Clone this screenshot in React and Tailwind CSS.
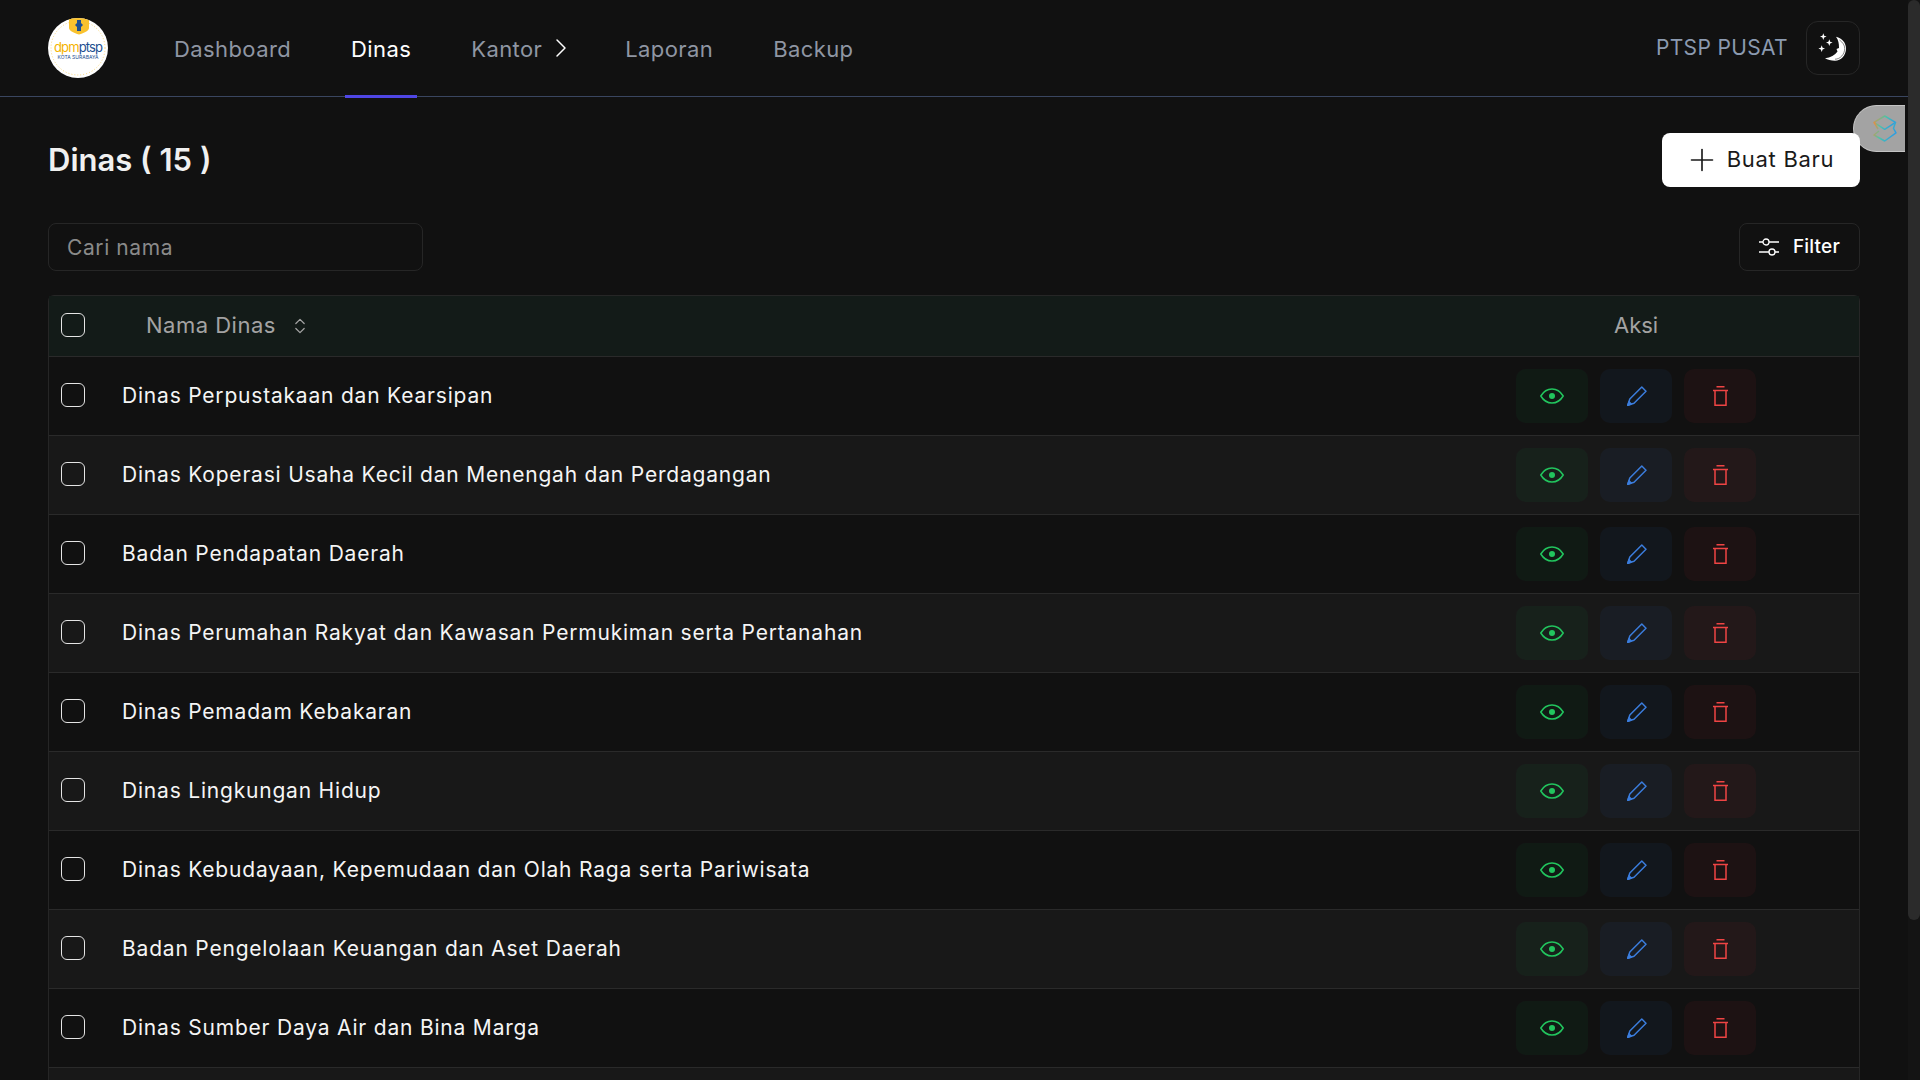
import React from 'react';
import { Plus, ChevronRight, ChevronsUpDown } from 'lucide-react';

const DINAS = [
  'Dinas Perpustakaan dan Kearsipan',
  'Dinas Koperasi Usaha Kecil dan Menengah dan Perdagangan',
  'Badan Pendapatan Daerah',
  'Dinas Perumahan Rakyat dan Kawasan Permukiman serta Pertanahan',
  'Dinas Pemadam Kebakaran',
  'Dinas Lingkungan Hidup',
  'Dinas Kebudayaan, Kepemudaan dan Olah Raga serta Pariwisata',
  'Badan Pengelolaan Keuangan dan Aset Daerah',
  'Dinas Sumber Daya Air dan Bina Marga',
];

function Logo() {
  return (
    <div className="w-[60px] h-[60px] rounded-full bg-white relative overflow-hidden shrink-0">
      <svg viewBox="0 0 60 60" className="absolute inset-0 w-full h-full">
        <circle cx="30" cy="30" r="27" fill="none" stroke="#f5c542" strokeWidth="0.7" strokeDasharray="1 2" />
        <path d="M21 0h20v10c0 3-5 5-10 6.500-5-1.500-10-3.500-10-6.500z" fill="#f9c22e" />
        <path d="M29 2h4v3l2 2-2 2v4h-4V9l-2-2 2-2z" fill="#1d4f91" />
      </svg>
      <div className="absolute left-0 right-0 top-[23px] text-center text-[13px] leading-[13px] tracking-[-0.9px] font-['Inter']">
        <span className="text-[#f5b301]">dpm</span><span className="text-[#1d4f91]">ptsp</span>
      </div>
      <div className="absolute left-0 right-0 top-[37px] text-center text-[5px] leading-[5px] text-[#1d4f91] font-['Inter']">KOTA SURABAYA</div>
    </div>
  );
}

function MoonStars() {
  return (
    <svg viewBox="-2 -2 30 30" className="w-[30px] h-[30px]" fill="none">
      <path d="M16 1.700C22.500 3.500 26 8 26 13.500 26 20.500 21 25.700 15 25.700 11 25.700 7.500 24.800 5 23.300 10.500 22.500 15 20 17.500 16.500L16.500 14 19 13C19 8.500 18.500 5 16 1.700Z" fill="#fff" />
      <path d="M19.500 5C22.800 7.500 24.700 10 24.700 13.500 24.700 19.500 20 24.200 15 24.200" stroke="#111" strokeWidth="0.5" />
      <path d="M3.300-1.700l.9 2.400 2.400.9-2.400.9-.9 2.400-.9-2.400-2.400-.9 2.400-.9zM9.300 4.300l.9 2.400 2.400.9-2.400.9-.9 2.400-.9-2.400-2.400-.9 2.400-.9zM1.700 10.300l.9 2.400 2.400.9-2.400.9-.9 2.400-.9-2.400-2.400-.9 2.400-.9z" fill="#fff" />
    </svg>
  );
}

function EyeIcon() {
  return (
    <svg viewBox="0 0 24 16" className="w-6 h-4" fill="none" stroke="#22c55e" strokeWidth="1.500">
      <path d="M.8 8C3.500 3.500 7.500 1 12 1s8.500 2.500 11.200 7C20.500 12.500 16.500 15 12 15S3.500 12.500.8 8z" />
      <circle cx="12" cy="8" r="3" fill="#22c55e" stroke="none" />
    </svg>
  );
}

function PencilIcon() {
  return (
    <svg viewBox="0 0 20 20" className="w-5 h-5 -mt-px ml-px" fill="none" stroke="#3b7ddd" strokeWidth="1.500" strokeLinejoin="round">
      <path d="M.8 19.200l2-6.200L14.800 1l4.200 4.200L7 17.200z" />
      <path d="M.8 19.200l1.200-3.500 2.300 2.300z" fill="#3b7ddd" />
    </svg>
  );
}

function TrashIcon() {
  return (
    <svg viewBox="0 0 15 20" className="w-[15px] h-5 -mt-px" fill="none" stroke="#ef4444" strokeWidth="1.500">
      <path d="M3.500.8h8M0 4.500h15M2 4.500v14.700h11V4.500" />
    </svg>
  );
}

function FilterIcon() {
  return (
    <svg viewBox="0 0 20 20" className="w-5 h-5" fill="none" stroke="#fff" strokeWidth="1.300">
      <path d="M0 5h4M10 5h10M0 15h10M16 15h4" />
      <circle cx="7" cy="5" r="3" />
      <circle cx="13" cy="15" r="3" />
    </svg>
  );
}

function StackLogo() {
  return (
    <svg viewBox="0 0 24 28" className="w-6 h-7" fill="none" strokeWidth="1.500" strokeLinejoin="round">
      <defs>
        <linearGradient id="stack" x1="0" y1="0" x2="1" y2="0.400">
          <stop offset="0" stopColor="#f08a3c" />
          <stop offset="0.5" stopColor="#4cc4a8" />
          <stop offset="1" stopColor="#2f9fe0" />
        </linearGradient>
      </defs>
      <path d="M1 7.300L11.700 1l10.800 6.300-10.800 7z" stroke="url(#stack)" />
      <path d="M1 7.300l4 6.700M22.500 7.300l-2 6 2.500 4.500-11.300 8.200L1 20l5-4" stroke="url(#stack)" />
    </svg>
  );
}

function Checkbox() {
  return <div className="w-6 h-6 -mt-[2px] rounded-md border border-[#e5e5e5] shrink-0" />;
}

function ActionButton({ tint, children }) {
  return <button className={`w-[72px] h-[54px] rounded-[10px] flex items-center justify-center ${tint}`}>{children}</button>;
}

function Row({ name, odd }) {
  return (
    <div className={`h-[79px] flex items-center pl-3 border-t border-[#2a2a2a] ${odd ? 'bg-[#181818]' : 'bg-[#111111]'}`}>
      <Checkbox />
      <div className="ml-[37px] flex-1 text-[21px] text-[#f5f5f5] tracking-[0.8px]">{name}</div>
      <div className="flex gap-3 w-[343px]">
        <ActionButton tint="bg-green-500/5"><EyeIcon /></ActionButton>
        <ActionButton tint="bg-blue-500/5"><PencilIcon /></ActionButton>
        <ActionButton tint="bg-red-500/5"><TrashIcon /></ActionButton>
      </div>
    </div>
  );
}

export default function App() {
  return (
    <div className="h-screen w-full overflow-hidden flex bg-[#111111] font-['Inter',sans-serif]">
      <div className="flex-1 min-w-0 flex flex-col">
        <header className="h-[97px] shrink-0 flex items-center pl-12 pr-[48px] border-b border-[#3a4660]">
          <Logo />
          <nav className="ml-[60px] flex h-full gap-[48px] text-[22px] text-[#8f96a3] tracking-[0.4px]">
            <a className="flex items-center px-[6px] pt-[3px]">Dashboard</a>
            <a className="relative flex items-center px-[6px] pt-[3px] text-white">Dinas
              <span className="absolute left-0 right-0 -bottom-[2px] h-[3px] bg-[#4f46e5]" />
            </a>
            <a className="flex items-center px-[6px] pt-[3px]">Kantor <ChevronRight className="w-8 h-8 ml-[3px] -mr-3 -mt-[3px] text-white" strokeWidth={1.1} /></a>
            <a className="flex items-center px-[6px] pt-[3px]">Laporan</a>
            <a className="flex items-center px-[6px] pt-[3px]">Backup</a>
          </nav>
          <div className="ml-auto flex items-center gap-[18px]">
            <span className="text-[21px] text-[#8b9ab0] tracking-[0.35px]">PTSP PUSAT</span>
            <button className="w-[54px] h-[54px] rounded-xl border border-[#262626] flex items-center justify-center"><MoonStars /></button>
          </div>
        </header>

        <main className="flex-1 min-h-0 pl-12 pr-12 relative">
          <div className="absolute right-[3px] top-[8px] w-[52px] h-[47px] rounded-l-[24px] bg-[#a3a3a3] border border-[#c4c4c4] border-r-0 flex items-center pl-[19px]">
            <StackLogo />
          </div>
          <div className="flex items-center justify-between pt-[36px] relative">
            <h1 className="text-[31px] font-semibold text-[#f0f0f0] leading-[40px]">Dinas ( 15 )</h1>
            <button className="h-[54px] w-[198px] rounded-lg bg-white flex items-center justify-center gap-[7px] pb-px text-[22px] text-[#1a1a1a] tracking-[0.7px]">
              <Plus className="w-9 h-9 -ml-1" strokeWidth={1.1} /> Buat Baru
            </button>
          </div>
          <div className="flex items-center justify-between mt-[36px]">
            <div className="w-[375px] h-[48px] rounded-lg border border-[#262626] flex items-center px-[18px] pt-px text-[21px] tracking-[0.6px] text-[#8a8a8a]">Cari nama</div>
            <button className="h-[48px] w-[121px] rounded-lg border border-[#262626] flex items-center justify-center gap-[14px] text-[19px] tracking-[0.2px] font-medium text-white">
              <FilterIcon /> Filter
            </button>
          </div>
          <div className="mt-[24px] border-x border-t border-[#262626] rounded-t-md">
            <div className="h-[60px] flex items-center pl-3 bg-[#131b18]">
              <Checkbox />
              <div className="ml-[61px] flex-1 flex items-center gap-[14px] pb-px text-[22px] tracking-[0.5px] text-[#a3a3a3]">Nama Dinas <ChevronsUpDown className="w-5 h-5 text-[#a3a3a3]" strokeWidth={1.5} /></div>
              <div className="w-[343px] pl-[98px] pb-px text-[22px] text-[#a3a3a3]">Aksi</div>
            </div>
            {DINAS.map((name, i) => <Row key={name} name={name} odd={i % 2 === 1} />)}
            <div className="h-[79px] border-t border-[#2a2a2a] bg-[#181818]" />
          </div>
        </main>
      </div>
      <div className="w-[12px] shrink-0 bg-[#141414]">
        <div className="h-[920px] rounded-full bg-[#2b2b2b]" />
      </div>
    </div>
  );
}
